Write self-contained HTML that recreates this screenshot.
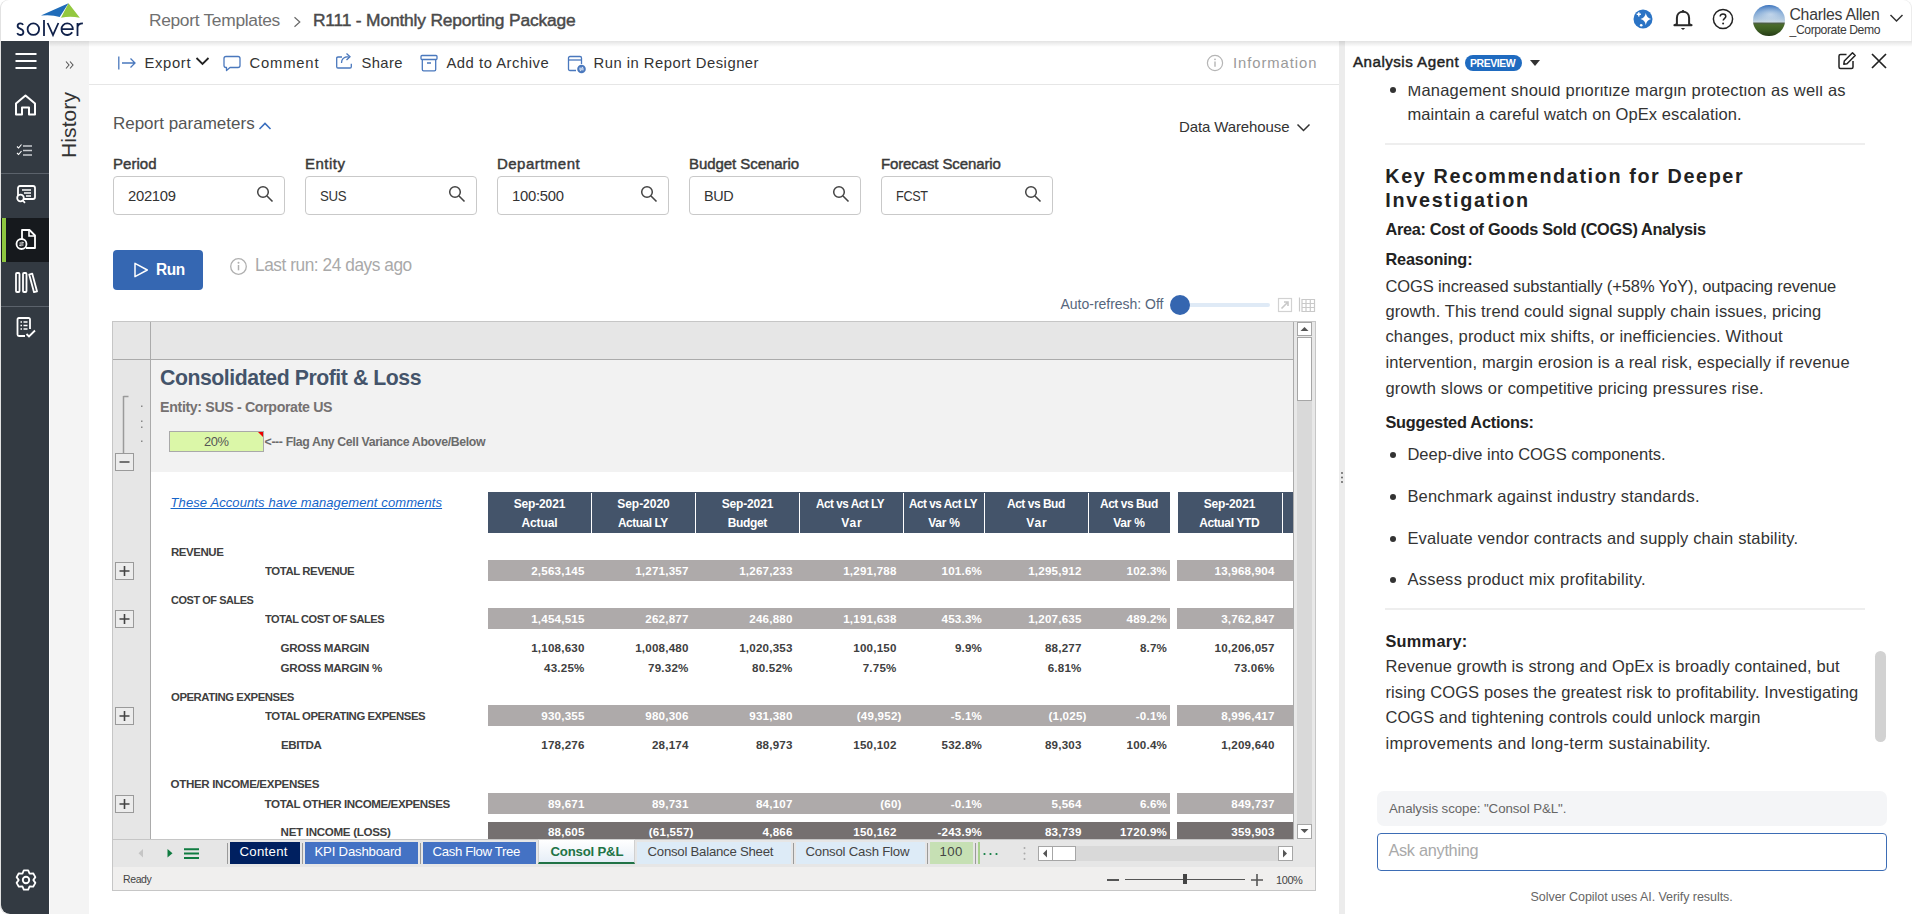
<!DOCTYPE html>
<html><head><meta charset="utf-8"><title>R111 - Monthly Reporting Package</title>
<style>
html,body{margin:0;padding:0;width:1912px;height:914px;overflow:hidden;background:#fff;font-family:"Liberation Sans",sans-serif;}
.t{position:absolute;white-space:nowrap;}
#clip{position:absolute;left:0;top:0;width:1912px;height:914px;overflow:hidden;}
</style></head><body><div id="clip">
<div style="position:absolute;left:0px;top:0px;width:1912px;height:914px;background:#fff;border-radius:8px;box-shadow:inset 1px 0 0 #e2e2e2,inset -1px 0 0 #ececec;"></div>
<div style="position:absolute;left:1px;top:41px;width:48px;height:873px;background:#333a42;border-bottom-left-radius:9px;"></div>
<div style="position:absolute;left:1px;top:218px;width:48px;height:44px;background:#16191d;"></div>
<div style="position:absolute;left:2px;top:218px;width:4px;height:44px;background:#8dc63f;"></div>
<div style="position:absolute;left:1px;top:173px;width:48px;height:1px;background:#5b626b;"></div>
<div style="position:absolute;left:1px;top:306px;width:48px;height:1px;background:#5b626b;"></div>
<div style="position:absolute;left:49px;top:41px;width:1px;height:873px;background:#fff;"></div>
<div style="position:absolute;left:50px;top:41px;width:39px;height:873px;background:#f4f4f4;"></div>
<div style="position:absolute;left:89px;top:41px;width:1250px;height:873px;background:#fff;"></div>
<div style="position:absolute;left:89px;top:84px;width:1250px;height:1px;background:#e6e6e6;"></div>
<div style="position:absolute;left:1339px;top:41px;width:6px;height:873px;background:#ececec;"></div>
<div style="position:absolute;left:1345px;top:41px;width:567px;height:873px;background:#fff;"></div>
<div style="position:absolute;left:49px;top:41px;width:1863px;height:6px;background:linear-gradient(rgba(0,0,0,0.11),rgba(0,0,0,0));"></div>
<svg style="position:absolute;left:0;top:0" width="90" height="40" viewBox="0 0 90 40"><path d="M40.9 15.5 L68.5 3.3 L59.7 17.1 Q52 14.3 40.9 15.5 Z" fill="#1f6cb9"/><path d="M68.5 3.3 L79.8 17.7 Q70 15.6 61 17.7 Z" fill="#93c83f"/><g fill="none" stroke="#10214a" stroke-width="1.8"><path d="M23.1 24.9 C22.5 23.7 21.5 23.3 20.4 23.3 C18.7 23.3 17.6 24.4 17.6 25.9 C17.6 27.5 18.9 28.2 20.5 28.8 C22.3 29.5 23.4 30.3 23.4 32.2 C23.4 34 22 35 20.2 35 C18.7 35 17.7 34.3 17.2 33.2"/><circle cx="33.35" cy="29.2" r="5.75"/><path d="M44 20.1 V35.9"/><path d="M47.6 23 L53 35 L58.4 23"/><path d="M61.6 29.1 H72.8 C72.8 25.8 70.4 23.4 67.2 23.4 C64 23.4 61.5 25.9 61.5 29.2 C61.5 32.5 64 35 67.2 35 C69.4 35 71.1 33.9 72.2 32.3"/><path d="M77.5 23 V35.9 M77.5 27.8 C77.5 24.9 79.5 23.4 82.9 23.4"/></g></svg>
<div class="t" style="left:148.89px;top:10px;font-size:17.4px;line-height:21px;color:#707070;letter-spacing:-0.305px;">Report Templates</div>
<svg style="position:absolute;left:290px;top:14px" width="14" height="16"><polyline points="4.5,3.2 9.8,8 4.5,12.8" fill="none" stroke="#6a6a6a" stroke-width="1.2"/></svg>
<div class="t" style="left:312.89px;top:10px;font-size:17.4px;line-height:21px;color:#4a4a4a;letter-spacing:-0.173px;-webkit-text-stroke:0.45px #4a4a4a;">R111 - Monthly Reporting Package</div>
<svg style="position:absolute;left:1633px;top:9px" width="20" height="20" viewBox="0 0 20 20"><circle cx="10" cy="10" r="9.5" fill="#2a73c5"/><path d="M12.8 4 Q13.6 9 18.2 10 Q13.6 11 12.8 16 Q12 11 7.4 10 Q12 9 12.8 4 Z" fill="#fff"/><path d="M5.8 3.2v4.2M3.7 5.3h4.2" stroke="#fff" stroke-width="1.4"/><circle cx="8.2" cy="16.3" r="1.3" fill="#fff"/></svg>
<svg style="position:absolute;left:1671px;top:6px" width="24" height="26" viewBox="0 0 24 26"><path d="M5.9 18.1 V12 C5.9 8.3 8.4 5.8 12 5.8 C15.6 5.8 18.1 8.3 18.1 12 V18.1 L20.6 19.2 H3.4 Z" fill="none" stroke="#2a2a2a" stroke-width="2" stroke-linejoin="round"/><circle cx="12" cy="5.2" r="1.3" fill="#2a2a2a"/><path d="M9.8 22 H14.2 L12 24 Z" fill="#2a2a2a"/></svg>
<svg style="position:absolute;left:1712px;top:8px" width="22" height="22" viewBox="0 0 22 22"><circle cx="11" cy="11" r="9.6" fill="none" stroke="#222" stroke-width="1.5"/><path d="M8.2 8.6 C8.2 6.9 9.5 6 11 6 C12.6 6 13.8 7 13.8 8.4 C13.8 10.3 11.2 10.4 11.2 12.6" fill="none" stroke="#222" stroke-width="1.5"/><circle cx="11.1" cy="15.4" r="1" fill="#222"/></svg>
<div style="position:absolute;left:1753px;top:5px;width:31.5px;height:31px;border-radius:50%;overflow:hidden;background:radial-gradient(ellipse 55% 30% at 55% 30%,rgba(235,242,248,0.6) 0%,rgba(235,242,248,0) 100%),linear-gradient(180deg,#3a72bd 0%,#6d9bd0 22%,#a9c3dd 45%,#c9d8e2 55%,#4d5c48 58%,#4a6b2a 64%,#3d5e22 80%,#263c17 100%);"></div>
<div class="t" style="left:1789.45px;top:5px;font-size:15.8px;line-height:19px;color:#3a3a3a;letter-spacing:-0.237px;">Charles Allen</div>
<div class="t" style="left:1789.57px;top:23px;font-size:12.2px;line-height:15px;color:#3a3a3a;letter-spacing:-0.430px;">_Corporate Demo</div>
<svg style="position:absolute;left:1888px;top:12px" width="17" height="12"><polyline points="2.5,3 8.5,9 14.5,3" fill="none" stroke="#333" stroke-width="1.5"/></svg>
<svg style="position:absolute;left:15px;top:52px" width="22" height="18"><path d="M0.5 2h21M0.5 9h21M0.5 16h21" stroke="#fff" stroke-width="2"/></svg>
<svg style="position:absolute;left:13px;top:93px" width="25" height="24" viewBox="0 0 25 24"><path d="M3 10.5 L12.5 2.5 L22 10.5 L22 21.5 L16 21.5 L16 14.5 L9 14.5 L9 21.5 L3 21.5 Z" fill="none" stroke="#fff" stroke-width="2" stroke-linejoin="round"/></svg>
<svg style="position:absolute;left:16px;top:143px" width="18" height="15" viewBox="0 0 18 15"><path d="M1 3.5 L2.6 5 L5.5 1.5 M1 10 L2.6 11.5 L5.5 8" fill="none" stroke="#fff" stroke-width="1.1"/><path d="M7 3h9M7 7.5h9M7 12h9" stroke="#c9ccd0" stroke-width="1.4"/></svg>
<svg style="position:absolute;left:15px;top:185px" width="22" height="19" viewBox="0 0 22 19"><rect x="3" y="1" width="17" height="13" rx="2" fill="none" stroke="#fff" stroke-width="1.8"/><path d="M7 5h9M9 8h7M11 11h5" stroke="#fff" stroke-width="1.6"/><circle cx="5.5" cy="13" r="3.3" fill="#333a42" stroke="#fff" stroke-width="1.8"/><path d="M7.8 15.5 L10 17.8" stroke="#fff" stroke-width="1.8"/></svg>
<svg style="position:absolute;left:15px;top:228px" width="22" height="22" viewBox="0 0 22 22"><path d="M7 14 L7 2 L14.5 2 L20 7.5 L20 20 L11 20" fill="none" stroke="#fff" stroke-width="1.8" stroke-linejoin="round"/><path d="M14 2 L14 8 L20 8" fill="none" stroke="#fff" stroke-width="1.6"/><circle cx="6.5" cy="16" r="5" fill="#16191d" stroke="#fff" stroke-width="1.8"/><path d="M4.5 15 h4 l-1.3 -1.3 M8.5 17 h-4 l1.3 1.3" fill="none" stroke="#fff" stroke-width="1"/></svg>
<svg style="position:absolute;left:14px;top:272px" width="24" height="22" viewBox="0 0 24 22"><rect x="2" y="1" width="3.5" height="19" rx="1" fill="none" stroke="#fff" stroke-width="1.8"/><rect x="9" y="1" width="3.5" height="19" rx="1" fill="none" stroke="#fff" stroke-width="1.8"/><path d="M15.2 2.5 L18.2 1.6 L23 19.3 L20 20.2 Z" fill="none" stroke="#fff" stroke-width="1.8" stroke-linejoin="round"/></svg>
<svg style="position:absolute;left:15px;top:317px" width="22" height="21" viewBox="0 0 22 21"><path d="M15 12 L15 2.5 Q15 1 13.5 1 L4 1 Q2.5 1 2.5 2.5 L2.5 17.5 Q2.5 19 4 19 L10 19" fill="none" stroke="#fff" stroke-width="1.8"/><path d="M5.5 5h1.5M8.5 5h4M5.5 8.5h1.5M8.5 8.5h4M5.5 12h1.5M8.5 12h4" stroke="#fff" stroke-width="1.6"/><path d="M11.5 17 L14 19.5 L20 13.5" fill="none" stroke="#fff" stroke-width="1.8"/></svg>
<svg style="position:absolute;left:13.5px;top:868px" width="24" height="24" viewBox="0 0 24 24"><path d="M8.41 5.53 L9.80 2.45 L14.20 2.45 L15.59 5.53 L15.81 5.66 L19.17 5.32 L21.37 9.13 L19.40 11.87 L19.40 12.13 L21.37 14.87 L19.17 18.68 L15.81 18.34 L15.59 18.47 L14.20 21.55 L9.80 21.55 L8.41 18.47 L8.19 18.34 L4.83 18.68 L2.63 14.87 L4.60 12.13 L4.60 11.87 L2.63 9.13 L4.83 5.32 L8.19 5.66 Z" fill="none" stroke="#fff" stroke-width="1.8" stroke-linejoin="round"/><circle cx="12" cy="12" r="3.2" fill="none" stroke="#fff" stroke-width="1.9"/></svg>
<svg style="position:absolute;left:64px;top:59px" width="11" height="12"><path d="M2 2.5 L5 6 L2 9.5 M6 2.5 L9 6 L6 9.5" fill="none" stroke="#555" stroke-width="1.1"/></svg>
<div style="position:absolute;left:75.5px;top:157.5px;transform:rotate(-90deg);transform-origin:0 0;font-family:'Liberation Sans';font-size:21px;line-height:21px;color:#333;white-space:nowrap;letter-spacing:0.1px;"><span style="position:relative;top:-17.8px">History</span></div>
<svg style="position:absolute;left:117px;top:55px" width="20" height="16" viewBox="0 0 20 16"><path d="M1.8 1.5v13M5 8h13M13.5 3.5 L18 8 L13.5 12.5" fill="none" stroke="#4a78bd" stroke-width="1.3"/></svg>
<div class="t" style="left:144.48px;top:54px;font-size:14.8px;line-height:18px;color:#333;letter-spacing:0.654px;">Export</div>
<svg style="position:absolute;left:194px;top:55px" width="17" height="12"><polyline points="2.5,3 8.5,9 14.5,3" fill="none" stroke="#222" stroke-width="1.8"/></svg>
<svg style="position:absolute;left:222px;top:54px" width="20" height="19" viewBox="0 0 20 19"><path d="M4 2.5 h12 q2 0 2 2 v7 q0 2 -2 2 h-8 l-3.5 3 v-3 h-0.5 q-2 0 -2 -2 v-7 q0 -2 2 -2z" fill="none" stroke="#4a78bd" stroke-width="1.3" stroke-linejoin="round"/></svg>
<div class="t" style="left:249.48px;top:54px;font-size:14.8px;line-height:18px;color:#333;letter-spacing:0.817px;">Comment</div>
<svg style="position:absolute;left:335px;top:51px" width="20" height="19" viewBox="0 0 20 19"><path d="M7 6 h-4 q-1.3 0-1.3 1.3 v8.4 q0 1.3 1.3 1.3 h12 q1.3 0 1.3-1.3 v-3" fill="none" stroke="#4a78bd" stroke-width="1.3"/><path d="M6.5 12 q0-6 7-6.3 M11.5 2.5 L15 5.8 L11.5 9" fill="none" stroke="#4a78bd" stroke-width="1.3"/></svg>
<div class="t" style="left:361.48px;top:54px;font-size:14.8px;line-height:18px;color:#333;letter-spacing:0.388px;">Share</div>
<svg style="position:absolute;left:419px;top:53px" width="20" height="20" viewBox="0 0 20 20"><rect x="2" y="2.5" width="16" height="4" rx="1" fill="none" stroke="#4a78bd" stroke-width="1.3"/><path d="M3.3 6.5 v10 q0 1.3 1.3 1.3 h10.8 q1.3 0 1.3-1.3 v-10 M8 10h4" fill="none" stroke="#4a78bd" stroke-width="1.3"/></svg>
<div class="t" style="left:446.48px;top:54px;font-size:14.8px;line-height:18px;color:#333;letter-spacing:0.524px;">Add to Archive</div>
<svg style="position:absolute;left:566px;top:54px" width="22" height="20" viewBox="0 0 22 20"><path d="M10 16.5 h-6 q-1.5 0-1.5-1.5 v-11 q0-1.5 1.5-1.5 h10 q1.5 0 1.5 1.5 v6" fill="none" stroke="#4a78bd" stroke-width="1.3"/><path d="M2.5 6h13" stroke="#4a78bd" stroke-width="1.3"/><circle cx="15.5" cy="15" r="4.3" fill="#4a78bd"/><path d="M13.3 14.2 h4 l-1.1-1.1 M17.7 15.8 h-4 l1.1 1.1" fill="none" stroke="#fff" stroke-width="0.9"/></svg>
<div class="t" style="left:593.48px;top:54px;font-size:14.8px;line-height:18px;color:#333;letter-spacing:0.496px;">Run in Report Designer</div>
<svg style="position:absolute;left:1206px;top:54px" width="18" height="18" viewBox="0 0 18 18"><circle cx="9" cy="9" r="7.6" fill="none" stroke="#b5b5b5" stroke-width="1.2"/><path d="M9 7.6v5.2" stroke="#b5b5b5" stroke-width="1.4"/><circle cx="9" cy="5.3" r="0.9" fill="#b5b5b5"/></svg>
<div class="t" style="left:1232.98px;top:54px;font-size:14.8px;line-height:18px;color:#9a9a9a;letter-spacing:0.952px;">Information</div>
<div class="t" style="left:112.91px;top:114px;font-size:17px;line-height:20px;color:#555;">Report parameters</div>
<svg style="position:absolute;left:257px;top:120px" width="16" height="11"><polyline points="2.5,9 8,3.5 13.5,9" fill="none" stroke="#3a6fbf" stroke-width="1.6"/></svg>
<div class="t" style="left:1178.97px;top:118px;font-size:15px;line-height:18px;color:#333;letter-spacing:-0.112px;">Data Warehouse</div>
<svg style="position:absolute;left:1295px;top:121px" width="17" height="13"><polyline points="2.5,3.5 8.5,9.5 14.5,3.5" fill="none" stroke="#333" stroke-width="1.5"/></svg>
<div class="t" style="left:112.97px;top:155px;font-size:15px;line-height:18px;color:#3a3a3a;letter-spacing:0.038px;-webkit-text-stroke:0.45px #3a3a3a;">Period</div>
<div style="position:absolute;left:113px;top:176px;width:172px;height:39px;box-sizing:border-box;border:1px solid #c9c9c9;border-radius:4px;background:#fff;"></div>
<div class="t" style="left:127.98px;top:187px;font-size:14.8px;line-height:18px;color:#333;letter-spacing:-0.268px;">202109</div>
<svg style="position:absolute;left:256px;top:185px" width="18" height="18" viewBox="0 0 18 18"><circle cx="7" cy="7" r="5.3" fill="none" stroke="#444" stroke-width="1.5"/><path d="M11 11 L16.5 16.5" stroke="#444" stroke-width="1.6"/></svg>
<div class="t" style="left:304.98px;top:155px;font-size:15px;line-height:18px;color:#3a3a3a;letter-spacing:0.507px;-webkit-text-stroke:0.45px #3a3a3a;">Entity</div>
<div style="position:absolute;left:305px;top:176px;width:172px;height:39px;box-sizing:border-box;border:1px solid #c9c9c9;border-radius:4px;background:#fff;"></div>
<div class="t" style="left:319.98px;top:187px;font-size:14.8px;line-height:18px;color:#333;transform:scaleX(0.8951);transform-origin:0.52px 0;letter-spacing:-0.450px;">SUS</div>
<svg style="position:absolute;left:448px;top:185px" width="18" height="18" viewBox="0 0 18 18"><circle cx="7" cy="7" r="5.3" fill="none" stroke="#444" stroke-width="1.5"/><path d="M11 11 L16.5 16.5" stroke="#444" stroke-width="1.6"/></svg>
<div class="t" style="left:496.98px;top:155px;font-size:15px;line-height:18px;color:#3a3a3a;letter-spacing:0.476px;-webkit-text-stroke:0.45px #3a3a3a;">Department</div>
<div style="position:absolute;left:497px;top:176px;width:172px;height:39px;box-sizing:border-box;border:1px solid #c9c9c9;border-radius:4px;background:#fff;"></div>
<div class="t" style="left:511.98px;top:187px;font-size:14.8px;line-height:18px;color:#333;letter-spacing:-0.242px;">100:500</div>
<svg style="position:absolute;left:640px;top:185px" width="18" height="18" viewBox="0 0 18 18"><circle cx="7" cy="7" r="5.3" fill="none" stroke="#444" stroke-width="1.5"/><path d="M11 11 L16.5 16.5" stroke="#444" stroke-width="1.6"/></svg>
<div class="t" style="left:688.98px;top:155px;font-size:15px;line-height:18px;color:#3a3a3a;letter-spacing:-0.061px;-webkit-text-stroke:0.45px #3a3a3a;">Budget Scenario</div>
<div style="position:absolute;left:689px;top:176px;width:172px;height:39px;box-sizing:border-box;border:1px solid #c9c9c9;border-radius:4px;background:#fff;"></div>
<div class="t" style="left:703.98px;top:187px;font-size:14.8px;line-height:18px;color:#333;transform:scaleX(0.9725);transform-origin:0.52px 0;letter-spacing:-0.450px;">BUD</div>
<svg style="position:absolute;left:832px;top:185px" width="18" height="18" viewBox="0 0 18 18"><circle cx="7" cy="7" r="5.3" fill="none" stroke="#444" stroke-width="1.5"/><path d="M11 11 L16.5 16.5" stroke="#444" stroke-width="1.6"/></svg>
<div class="t" style="left:880.98px;top:155px;font-size:15px;line-height:18px;color:#3a3a3a;letter-spacing:-0.117px;-webkit-text-stroke:0.45px #3a3a3a;">Forecast Scenario</div>
<div style="position:absolute;left:881px;top:176px;width:172px;height:39px;box-sizing:border-box;border:1px solid #c9c9c9;border-radius:4px;background:#fff;"></div>
<div class="t" style="left:895.98px;top:187px;font-size:14.8px;line-height:18px;color:#333;transform:scaleX(0.8553);transform-origin:0.52px 0;letter-spacing:-0.450px;">FCST</div>
<svg style="position:absolute;left:1024px;top:185px" width="18" height="18" viewBox="0 0 18 18"><circle cx="7" cy="7" r="5.3" fill="none" stroke="#444" stroke-width="1.5"/><path d="M11 11 L16.5 16.5" stroke="#444" stroke-width="1.6"/></svg>
<div style="position:absolute;left:113px;top:250px;width:90px;height:40px;background:#3567b2;border-radius:4px;"></div>
<svg style="position:absolute;left:132px;top:261px" width="18" height="18" viewBox="0 0 18 18"><path d="M3 2.3 L15.3 9 L3 15.7 Z" fill="none" stroke="#fff" stroke-width="1.5" stroke-linejoin="round"/></svg>
<div class="t" style="left:156.44px;top:260px;font-size:16px;line-height:19px;color:#fff;transform:scaleX(0.9628);transform-origin:0.56px 0;font-weight:700;letter-spacing:-0.450px;">Run</div>
<svg style="position:absolute;left:229px;top:257px" width="19" height="19" viewBox="0 0 19 19"><circle cx="9.5" cy="9.5" r="7.8" fill="none" stroke="#b0b0b0" stroke-width="1.3"/><path d="M9.5 8v5.3" stroke="#b0b0b0" stroke-width="1.5"/><circle cx="9.5" cy="5.7" r="1" fill="#b0b0b0"/></svg>
<div class="t" style="left:255.39px;top:255px;font-size:17.5px;line-height:21px;color:#a9a9a9;transform:scaleX(0.9868);transform-origin:0.61px 0;letter-spacing:-0.450px;">Last run: 24 days ago</div>
<div class="t" style="left:1060.51px;top:296px;font-size:14px;line-height:17px;color:#56667c;letter-spacing:-0.016px;">Auto-refresh: Off</div>
<div style="position:absolute;left:1180px;top:303px;width:90px;height:4px;background:#dfeaf6;border-radius:2px;"></div>
<div style="position:absolute;left:1170px;top:295px;width:20px;height:20px;background:#3566b0;border-radius:50%;"></div>
<svg style="position:absolute;left:1277px;top:297px" width="16" height="16" viewBox="0 0 16 16"><rect x="1.5" y="1.5" width="13" height="13" fill="none" stroke="#d2d2d2" stroke-width="1.2"/><path d="M4.5 11.5 L11 5 M7 5h4v4" fill="none" stroke="#c8c8c8" stroke-width="1.6"/></svg>
<svg style="position:absolute;left:1298px;top:296px" width="18" height="17" viewBox="0 0 18 17"><path d="M1.5 1.5v14M4 3.5h12.5v12H4zM4 7.5h12.5M4 11.5h12.5M8 3.5v12M12.3 3.5v12" fill="none" stroke="#c9c9c9" stroke-width="1.2"/></svg>
<div style="position:absolute;left:112px;top:321px;width:1204px;height:570px;box-sizing:border-box;border:1px solid #c6c6c6;background:#fff;"></div>
<div style="position:absolute;left:113px;top:322px;width:1181px;height:37px;background:#e6e6e6;"></div>
<div style="position:absolute;left:113px;top:359px;width:1181px;height:1px;background:#ababab;"></div>
<div style="position:absolute;left:113px;top:360px;width:37px;height:479px;background:#e6e6e6;"></div>
<div style="position:absolute;left:150px;top:322px;width:1px;height:517px;background:#ababab;"></div>
<div style="position:absolute;left:151px;top:360px;width:1142px;height:112px;background:#f2f2f2;"></div>
<div style="position:absolute;left:1293px;top:322px;width:1px;height:517px;background:#ababab;"></div>
<div style="position:absolute;left:1294px;top:322px;width:21px;height:518px;background:#e8e8e8;"></div>
<div style="position:absolute;left:1297px;top:337px;width:15px;height:502px;background:#d9d9d9;"></div>
<div style="position:absolute;left:1297px;top:322px;width:15px;height:14px;box-sizing:border-box;border:1px solid #a6a6a6;background:#fff;"></div>
<svg style="position:absolute;left:1299px;top:324px" width="11" height="10"><path d="M1.5 7 L5.5 3 L9.5 7 Z" fill="#555"/></svg>
<div style="position:absolute;left:1297px;top:337px;width:15px;height:64px;box-sizing:border-box;border:1px solid #a6a6a6;background:#fff;"></div>
<div style="position:absolute;left:1297px;top:824px;width:15px;height:15px;box-sizing:border-box;border:1px solid #a6a6a6;background:#fff;"></div>
<svg style="position:absolute;left:1299px;top:826px" width="11" height="10"><path d="M1.5 3 L5.5 7 L9.5 3 Z" fill="#555"/></svg>
<svg style="position:absolute;left:113px;top:390px" width="37" height="84"><path d="M10.5 6.5 h5 M10.5 6 v58" stroke="#9a9a9a" stroke-width="1.5" fill="none"/><rect x="28" y="15.5" width="1.5" height="1.5" fill="#888"/><rect x="28" y="30.5" width="1.5" height="1.5" fill="#888"/><rect x="28" y="36.5" width="1.5" height="1.5" fill="#888"/><rect x="28" y="50.5" width="1.5" height="1.5" fill="#888"/><rect x="2.5" y="63.5" width="18" height="17" fill="#ececec" stroke="#9a9a9a"/><path d="M6.5 72 h10" stroke="#555" stroke-width="1.6"/></svg>
<svg style="position:absolute;left:113px;top:562px" width="22" height="20"><rect x="2.5" y="0.5" width="18" height="17" fill="#ececec" stroke="#9a9a9a"/><path d="M6.5 9 h10 M11.5 4 v10" stroke="#444" stroke-width="1.6"/></svg>
<svg style="position:absolute;left:113px;top:610px" width="22" height="20"><rect x="2.5" y="0.5" width="18" height="17" fill="#ececec" stroke="#9a9a9a"/><path d="M6.5 9 h10 M11.5 4 v10" stroke="#444" stroke-width="1.6"/></svg>
<svg style="position:absolute;left:113px;top:707px" width="22" height="20"><rect x="2.5" y="0.5" width="18" height="17" fill="#ececec" stroke="#9a9a9a"/><path d="M6.5 9 h10 M11.5 4 v10" stroke="#444" stroke-width="1.6"/></svg>
<svg style="position:absolute;left:113px;top:795px" width="22" height="20"><rect x="2.5" y="0.5" width="18" height="17" fill="#ececec" stroke="#9a9a9a"/><path d="M6.5 9 h10 M11.5 4 v10" stroke="#444" stroke-width="1.6"/></svg>
<div class="t" style="left:159.85px;top:365px;font-size:21.4px;line-height:26px;color:#44546a;transform:scaleX(0.9932);transform-origin:0.75px 0;font-weight:700;letter-spacing:-0.450px;">Consolidated Profit &amp; Loss</div>
<div class="t" style="left:160.10px;top:399px;font-size:14.2px;line-height:17px;color:#757171;font-weight:700;letter-spacing:-0.356px;">Entity: SUS - Corporate US</div>
<div style="position:absolute;left:169px;top:431px;width:95px;height:21px;box-sizing:border-box;border:1px solid #a9a9a9;background:#dbf7a8;"></div>
<svg style="position:absolute;left:258px;top:432px" width="5" height="5"><path d="M0 0 H5 V5 Z" fill="#e00"/></svg>
<div class="t" style="left:203.94px;top:434px;font-size:13px;line-height:16px;color:#555;transform:scaleX(0.9914);transform-origin:0.46px 0;letter-spacing:-0.450px;">20%</div>
<div class="t" style="left:264.57px;top:435px;font-size:12.3px;line-height:15px;color:#6b6b6b;font-weight:700;letter-spacing:-0.357px;">&lt;--- Flag Any Cell Variance Above/Below</div>
<div class="t" style="left:170.54px;top:495px;font-size:13px;line-height:16px;color:#1565c9;font-style:italic;letter-spacing:0.101px;text-decoration:underline;text-underline-offset:1px;">These Accounts have management comments</div>
<div style="position:absolute;left:488px;top:492px;width:682px;height:41px;background:#44546a;"></div>
<div style="position:absolute;left:1178px;top:492px;width:115px;height:41px;background:#44546a;"></div>
<div style="position:absolute;left:591px;top:493px;width:1px;height:40px;background:#fff;"></div>
<div style="position:absolute;left:695px;top:493px;width:1px;height:40px;background:#fff;"></div>
<div style="position:absolute;left:799px;top:493px;width:1px;height:40px;background:#fff;"></div>
<div style="position:absolute;left:903px;top:493px;width:1px;height:40px;background:#fff;"></div>
<div style="position:absolute;left:984px;top:493px;width:1px;height:40px;background:#fff;"></div>
<div style="position:absolute;left:1088px;top:493px;width:1px;height:40px;background:#fff;"></div>
<div style="position:absolute;left:1282px;top:493px;width:1px;height:40px;background:#fff;"></div>
<div class="t" style="left:513.63px;top:497px;font-size:12px;line-height:14px;color:#fff;font-weight:700;letter-spacing:-0.137px;">Sep-2021</div>
<div class="t" style="left:521.43px;top:516px;font-size:12px;line-height:14px;color:#fff;font-weight:700;letter-spacing:-0.107px;">Actual</div>
<div class="t" style="left:617.28px;top:497px;font-size:12px;line-height:14px;color:#fff;font-weight:700;letter-spacing:-0.037px;">Sep-2020</div>
<div class="t" style="left:618.18px;top:516px;font-size:12px;line-height:14px;color:#fff;transform:scaleX(0.9879);transform-origin:0.42px 0;font-weight:700;letter-spacing:-0.450px;">Actual LY</div>
<div class="t" style="left:721.63px;top:497px;font-size:12px;line-height:14px;color:#fff;font-weight:700;letter-spacing:-0.137px;">Sep-2021</div>
<div class="t" style="left:727.63px;top:516px;font-size:12px;line-height:14px;color:#fff;font-weight:700;letter-spacing:-0.317px;">Budget</div>
<div class="t" style="left:816.07px;top:497px;font-size:12px;line-height:14px;color:#fff;transform:scaleX(0.9727);transform-origin:0.42px 0;font-weight:700;letter-spacing:-0.450px;">Act vs Act LY</div>
<div class="t" style="left:841.33px;top:516px;font-size:12px;line-height:14px;color:#fff;font-weight:700;letter-spacing:0.827px;">Var</div>
<div class="t" style="left:908.57px;top:497px;font-size:12px;line-height:14px;color:#fff;transform:scaleX(0.9727);transform-origin:0.42px 0;font-weight:700;letter-spacing:-0.450px;">Act vs Act LY</div>
<div class="t" style="left:928.18px;top:516px;font-size:12px;line-height:14px;color:#fff;font-weight:700;letter-spacing:-0.262px;">Var %</div>
<div class="t" style="left:1007.19px;top:497px;font-size:12px;line-height:14px;color:#fff;transform:scaleX(0.9933);transform-origin:0.42px 0;font-weight:700;letter-spacing:-0.450px;">Act vs Bud</div>
<div class="t" style="left:1026.33px;top:516px;font-size:12px;line-height:14px;color:#fff;font-weight:700;letter-spacing:0.827px;">Var</div>
<div class="t" style="left:1099.69px;top:497px;font-size:12px;line-height:14px;color:#fff;transform:scaleX(0.9933);transform-origin:0.42px 0;font-weight:700;letter-spacing:-0.450px;">Act vs Bud</div>
<div class="t" style="left:1113.18px;top:516px;font-size:12px;line-height:14px;color:#fff;font-weight:700;letter-spacing:-0.262px;">Var %</div>
<div class="t" style="left:1203.63px;top:497px;font-size:12px;line-height:14px;color:#fff;font-weight:700;letter-spacing:-0.137px;">Sep-2021</div>
<div class="t" style="left:1199.13px;top:516px;font-size:12px;line-height:14px;color:#fff;font-weight:700;letter-spacing:-0.363px;">Actual YTD</div>
<div class="t" style="left:170.59px;top:545px;font-size:11.6px;line-height:14px;color:#404040;transform:scaleX(0.9898);transform-origin:0.41px 0;font-weight:700;letter-spacing:-0.450px;">REVENUE</div>
<div class="t" style="left:264.59px;top:564px;font-size:11.6px;line-height:14px;color:#404040;transform:scaleX(0.9821);transform-origin:0.41px 0;font-weight:700;letter-spacing:-0.450px;">TOTAL REVENUE</div>
<div class="t" style="left:170.59px;top:593px;font-size:11.6px;line-height:14px;color:#404040;transform:scaleX(0.9405);transform-origin:0.41px 0;font-weight:700;letter-spacing:-0.450px;">COST OF SALES</div>
<div class="t" style="left:264.59px;top:612px;font-size:11.6px;line-height:14px;color:#404040;transform:scaleX(0.9499);transform-origin:0.41px 0;font-weight:700;letter-spacing:-0.450px;">TOTAL COST OF SALES</div>
<div class="t" style="left:280.59px;top:641px;font-size:11.6px;line-height:14px;color:#404040;font-weight:700;letter-spacing:-0.300px;">GROSS MARGIN</div>
<div class="t" style="left:280.59px;top:661px;font-size:11.6px;line-height:14px;color:#404040;font-weight:700;letter-spacing:-0.294px;">GROSS MARGIN %</div>
<div class="t" style="left:170.59px;top:690px;font-size:11.6px;line-height:14px;color:#404040;transform:scaleX(0.9775);transform-origin:0.41px 0;font-weight:700;letter-spacing:-0.450px;">OPERATING EXPENSES</div>
<div class="t" style="left:264.59px;top:709px;font-size:11.6px;line-height:14px;color:#404040;transform:scaleX(0.9791);transform-origin:0.41px 0;font-weight:700;letter-spacing:-0.450px;">TOTAL OPERATING EXPENSES</div>
<div class="t" style="left:280.59px;top:738px;font-size:11.6px;line-height:14px;color:#404040;transform:scaleX(0.9977);transform-origin:0.41px 0;font-weight:700;letter-spacing:-0.450px;">EBITDA</div>
<div class="t" style="left:170.59px;top:777px;font-size:11.6px;line-height:14px;color:#404040;font-weight:700;letter-spacing:-0.354px;">OTHER INCOME/EXPENSES</div>
<div class="t" style="left:264.59px;top:797px;font-size:11.6px;line-height:14px;color:#404040;font-weight:700;letter-spacing:-0.418px;">TOTAL OTHER INCOME/EXPENSES</div>
<div class="t" style="left:280.59px;top:825px;font-size:11.6px;line-height:14px;color:#404040;font-weight:700;letter-spacing:-0.311px;">NET INCOME (LOSS)</div>
<div style="position:absolute;left:488px;top:560px;width:682px;height:21px;background:#aeaaaa;"></div>
<div style="position:absolute;left:1177px;top:560px;width:116px;height:21px;background:#aeaaaa;"></div>
<div style="position:absolute;left:488px;top:608px;width:682px;height:21px;background:#aeaaaa;"></div>
<div style="position:absolute;left:1177px;top:608px;width:116px;height:21px;background:#aeaaaa;"></div>
<div style="position:absolute;left:488px;top:705px;width:682px;height:21px;background:#aeaaaa;"></div>
<div style="position:absolute;left:1177px;top:705px;width:116px;height:21px;background:#aeaaaa;"></div>
<div style="position:absolute;left:488px;top:793px;width:682px;height:21px;background:#aeaaaa;"></div>
<div style="position:absolute;left:1177px;top:793px;width:116px;height:21px;background:#aeaaaa;"></div>
<div style="position:absolute;left:488px;top:822px;width:682px;height:17px;background:#757070;"></div>
<div style="position:absolute;left:1177px;top:822px;width:116px;height:17px;background:#757070;"></div>
<div class="t" style="left:531.23px;top:564px;font-size:11.6px;line-height:14px;color:#fff;font-weight:700;letter-spacing:0.200px;">2,563,145</div>
<div class="t" style="left:635.23px;top:564px;font-size:11.6px;line-height:14px;color:#fff;font-weight:700;letter-spacing:0.200px;">1,271,357</div>
<div class="t" style="left:739.23px;top:564px;font-size:11.6px;line-height:14px;color:#fff;font-weight:700;letter-spacing:0.200px;">1,267,233</div>
<div class="t" style="left:843.23px;top:564px;font-size:11.6px;line-height:14px;color:#fff;font-weight:700;letter-spacing:0.200px;">1,291,788</div>
<div class="t" style="left:941.58px;top:564px;font-size:11.6px;line-height:14px;color:#fff;font-weight:700;letter-spacing:0.200px;">101.6%</div>
<div class="t" style="left:1028.23px;top:564px;font-size:11.6px;line-height:14px;color:#fff;font-weight:700;letter-spacing:0.200px;">1,295,912</div>
<div class="t" style="left:1126.58px;top:564px;font-size:11.6px;line-height:14px;color:#fff;font-weight:700;letter-spacing:0.200px;">102.3%</div>
<div class="t" style="left:1214.58px;top:564px;font-size:11.6px;line-height:14px;color:#fff;font-weight:700;letter-spacing:0.200px;">13,968,904</div>
<div class="t" style="left:531.23px;top:612px;font-size:11.6px;line-height:14px;color:#fff;font-weight:700;letter-spacing:0.200px;">1,454,515</div>
<div class="t" style="left:645.30px;top:612px;font-size:11.6px;line-height:14px;color:#fff;font-weight:700;letter-spacing:0.200px;">262,877</div>
<div class="t" style="left:749.30px;top:612px;font-size:11.6px;line-height:14px;color:#fff;font-weight:700;letter-spacing:0.200px;">246,880</div>
<div class="t" style="left:843.23px;top:612px;font-size:11.6px;line-height:14px;color:#fff;font-weight:700;letter-spacing:0.200px;">1,191,638</div>
<div class="t" style="left:941.58px;top:612px;font-size:11.6px;line-height:14px;color:#fff;font-weight:700;letter-spacing:0.200px;">453.3%</div>
<div class="t" style="left:1028.23px;top:612px;font-size:11.6px;line-height:14px;color:#fff;font-weight:700;letter-spacing:0.200px;">1,207,635</div>
<div class="t" style="left:1126.58px;top:612px;font-size:11.6px;line-height:14px;color:#fff;font-weight:700;letter-spacing:0.200px;">489.2%</div>
<div class="t" style="left:1221.23px;top:612px;font-size:11.6px;line-height:14px;color:#fff;font-weight:700;letter-spacing:0.200px;">3,762,847</div>
<div class="t" style="left:531.23px;top:641px;font-size:11.6px;line-height:14px;color:#404040;font-weight:700;letter-spacing:0.200px;">1,108,630</div>
<div class="t" style="left:635.23px;top:641px;font-size:11.6px;line-height:14px;color:#404040;font-weight:700;letter-spacing:0.200px;">1,008,480</div>
<div class="t" style="left:739.23px;top:641px;font-size:11.6px;line-height:14px;color:#404040;font-weight:700;letter-spacing:0.200px;">1,020,353</div>
<div class="t" style="left:853.30px;top:641px;font-size:11.6px;line-height:14px;color:#404040;font-weight:700;letter-spacing:0.200px;">100,150</div>
<div class="t" style="left:954.88px;top:641px;font-size:11.6px;line-height:14px;color:#404040;font-weight:700;letter-spacing:0.200px;">9.9%</div>
<div class="t" style="left:1044.95px;top:641px;font-size:11.6px;line-height:14px;color:#404040;font-weight:700;letter-spacing:0.200px;">88,277</div>
<div class="t" style="left:1139.88px;top:641px;font-size:11.6px;line-height:14px;color:#404040;font-weight:700;letter-spacing:0.200px;">8.7%</div>
<div class="t" style="left:1214.58px;top:641px;font-size:11.6px;line-height:14px;color:#404040;font-weight:700;letter-spacing:0.200px;">10,206,057</div>
<div class="t" style="left:544.08px;top:661px;font-size:11.6px;line-height:14px;color:#404040;font-weight:700;letter-spacing:0.200px;">43.25%</div>
<div class="t" style="left:648.08px;top:661px;font-size:11.6px;line-height:14px;color:#404040;font-weight:700;letter-spacing:0.200px;">79.32%</div>
<div class="t" style="left:752.08px;top:661px;font-size:11.6px;line-height:14px;color:#404040;font-weight:700;letter-spacing:0.200px;">80.52%</div>
<div class="t" style="left:862.73px;top:661px;font-size:11.6px;line-height:14px;color:#404040;font-weight:700;letter-spacing:0.200px;">7.75%</div>
<div class="t" style="left:1047.73px;top:661px;font-size:11.6px;line-height:14px;color:#404040;font-weight:700;letter-spacing:0.200px;">6.81%</div>
<div class="t" style="left:1234.08px;top:661px;font-size:11.6px;line-height:14px;color:#404040;font-weight:700;letter-spacing:0.200px;">73.06%</div>
<div class="t" style="left:541.30px;top:709px;font-size:11.6px;line-height:14px;color:#fff;font-weight:700;letter-spacing:0.200px;">930,355</div>
<div class="t" style="left:645.30px;top:709px;font-size:11.6px;line-height:14px;color:#fff;font-weight:700;letter-spacing:0.200px;">980,306</div>
<div class="t" style="left:749.30px;top:709px;font-size:11.6px;line-height:14px;color:#fff;font-weight:700;letter-spacing:0.200px;">931,380</div>
<div class="t" style="left:856.82px;top:709px;font-size:11.6px;line-height:14px;color:#fff;font-weight:700;letter-spacing:0.200px;">(49,952)</div>
<div class="t" style="left:950.82px;top:709px;font-size:11.6px;line-height:14px;color:#fff;font-weight:700;letter-spacing:0.200px;">-5.1%</div>
<div class="t" style="left:1048.47px;top:709px;font-size:11.6px;line-height:14px;color:#fff;font-weight:700;letter-spacing:0.200px;">(1,025)</div>
<div class="t" style="left:1135.82px;top:709px;font-size:11.6px;line-height:14px;color:#fff;font-weight:700;letter-spacing:0.200px;">-0.1%</div>
<div class="t" style="left:1221.23px;top:709px;font-size:11.6px;line-height:14px;color:#fff;font-weight:700;letter-spacing:0.200px;">8,996,417</div>
<div class="t" style="left:541.30px;top:738px;font-size:11.6px;line-height:14px;color:#404040;font-weight:700;letter-spacing:0.200px;">178,276</div>
<div class="t" style="left:651.95px;top:738px;font-size:11.6px;line-height:14px;color:#404040;font-weight:700;letter-spacing:0.200px;">28,174</div>
<div class="t" style="left:755.95px;top:738px;font-size:11.6px;line-height:14px;color:#404040;font-weight:700;letter-spacing:0.200px;">88,973</div>
<div class="t" style="left:853.30px;top:738px;font-size:11.6px;line-height:14px;color:#404040;font-weight:700;letter-spacing:0.200px;">150,102</div>
<div class="t" style="left:941.58px;top:738px;font-size:11.6px;line-height:14px;color:#404040;font-weight:700;letter-spacing:0.200px;">532.8%</div>
<div class="t" style="left:1044.95px;top:738px;font-size:11.6px;line-height:14px;color:#404040;font-weight:700;letter-spacing:0.200px;">89,303</div>
<div class="t" style="left:1126.58px;top:738px;font-size:11.6px;line-height:14px;color:#404040;font-weight:700;letter-spacing:0.200px;">100.4%</div>
<div class="t" style="left:1221.23px;top:738px;font-size:11.6px;line-height:14px;color:#404040;font-weight:700;letter-spacing:0.200px;">1,209,640</div>
<div class="t" style="left:547.95px;top:797px;font-size:11.6px;line-height:14px;color:#fff;font-weight:700;letter-spacing:0.200px;">89,671</div>
<div class="t" style="left:651.95px;top:797px;font-size:11.6px;line-height:14px;color:#fff;font-weight:700;letter-spacing:0.200px;">89,731</div>
<div class="t" style="left:755.95px;top:797px;font-size:11.6px;line-height:14px;color:#fff;font-weight:700;letter-spacing:0.200px;">84,107</div>
<div class="t" style="left:880.19px;top:797px;font-size:11.6px;line-height:14px;color:#fff;font-weight:700;letter-spacing:0.200px;">(60)</div>
<div class="t" style="left:950.82px;top:797px;font-size:11.6px;line-height:14px;color:#fff;font-weight:700;letter-spacing:0.200px;">-0.1%</div>
<div class="t" style="left:1051.59px;top:797px;font-size:11.6px;line-height:14px;color:#fff;font-weight:700;letter-spacing:0.200px;">5,564</div>
<div class="t" style="left:1139.88px;top:797px;font-size:11.6px;line-height:14px;color:#fff;font-weight:700;letter-spacing:0.200px;">6.6%</div>
<div class="t" style="left:1231.30px;top:797px;font-size:11.6px;line-height:14px;color:#fff;font-weight:700;letter-spacing:0.200px;">849,737</div>
<div class="t" style="left:547.95px;top:825px;font-size:11.6px;line-height:14px;color:#fff;font-weight:700;letter-spacing:0.200px;">88,605</div>
<div class="t" style="left:648.82px;top:825px;font-size:11.6px;line-height:14px;color:#fff;font-weight:700;letter-spacing:0.200px;">(61,557)</div>
<div class="t" style="left:762.59px;top:825px;font-size:11.6px;line-height:14px;color:#fff;font-weight:700;letter-spacing:0.200px;">4,866</div>
<div class="t" style="left:853.30px;top:825px;font-size:11.6px;line-height:14px;color:#fff;font-weight:700;letter-spacing:0.200px;">150,162</div>
<div class="t" style="left:937.52px;top:825px;font-size:11.6px;line-height:14px;color:#fff;font-weight:700;letter-spacing:0.200px;">-243.9%</div>
<div class="t" style="left:1044.95px;top:825px;font-size:11.6px;line-height:14px;color:#fff;font-weight:700;letter-spacing:0.200px;">83,739</div>
<div class="t" style="left:1119.94px;top:825px;font-size:11.6px;line-height:14px;color:#fff;font-weight:700;letter-spacing:0.200px;">1720.9%</div>
<div class="t" style="left:1231.30px;top:825px;font-size:11.6px;line-height:14px;color:#fff;font-weight:700;letter-spacing:0.200px;">359,903</div>
<div style="position:absolute;left:113px;top:839px;width:1181px;height:1px;background:#c6c6c6;"></div>
<div style="position:absolute;left:113px;top:840px;width:1202px;height:27px;background:#e6e6e6;"></div>
<div style="position:absolute;left:113px;top:867px;width:1202px;height:23px;background:#f0efee;"></div>
<svg style="position:absolute;left:136px;top:848px" width="10" height="11"><path d="M7 1 L2.5 5.3 L7 9.6 Z" fill="#c5c5c5"/></svg>
<svg style="position:absolute;left:165px;top:848px" width="10" height="11"><path d="M2.5 1 L7.5 5.3 L2.5 9.6 Z" fill="#107c41"/></svg>
<svg style="position:absolute;left:183px;top:847px" width="17" height="14"><path d="M1 2.2h15M1 6.5h15M1 11h15" stroke="#107c41" stroke-width="2"/></svg>
<div style="position:absolute;left:227px;top:843px;width:1px;height:21px;background:#9a9a9a;"></div>
<div style="position:absolute;left:230px;top:842px;width:70px;height:22px;background:#002060;"></div>
<div class="t" style="left:239.54px;top:844px;font-size:13.2px;line-height:16px;color:#fff;letter-spacing:0.289px;">Content</div>
<div style="position:absolute;left:302px;top:843px;width:1px;height:21px;background:#9a9a9a;"></div>
<div style="position:absolute;left:305px;top:842px;width:113px;height:22px;background:#4472c4;"></div>
<div class="t" style="left:314.54px;top:844px;font-size:13.2px;line-height:16px;color:#fff;letter-spacing:-0.209px;">KPI Dashboard</div>
<div style="position:absolute;left:420px;top:843px;width:1px;height:21px;background:#9a9a9a;"></div>
<div style="position:absolute;left:423px;top:842px;width:113px;height:22px;background:#4472c4;"></div>
<div class="t" style="left:432.54px;top:844px;font-size:13.2px;line-height:16px;color:#fff;letter-spacing:-0.358px;">Cash Flow Tree</div>
<div style="position:absolute;left:538px;top:839px;width:97px;height:25px;box-sizing:border-box;border:1px solid #d0d0d0;border-bottom:2px solid #217346;background:linear-gradient(#fff,#e6eef7);"></div>
<div class="t" style="left:550.54px;top:844px;font-size:13.2px;line-height:16px;color:#217346;font-weight:700;letter-spacing:-0.200px;">Consol P&amp;L</div>
<div style="position:absolute;left:637px;top:842px;width:154px;height:22px;background:#ddebf7;"></div>
<div class="t" style="left:647.54px;top:844px;font-size:13.2px;line-height:16px;color:#444;letter-spacing:-0.241px;">Consol Balance Sheet</div>
<div style="position:absolute;left:793px;top:843px;width:1px;height:21px;background:#9a9a9a;"></div>
<div style="position:absolute;left:796px;top:842px;width:129px;height:22px;background:#ddebf7;"></div>
<div class="t" style="left:805.54px;top:844px;font-size:13.2px;line-height:16px;color:#444;letter-spacing:-0.206px;">Consol Cash Flow</div>
<div style="position:absolute;left:927px;top:843px;width:1px;height:21px;background:#9a9a9a;"></div>
<div style="position:absolute;left:930px;top:842px;width:43px;height:22px;background:#c6e0b4;"></div>
<div class="t" style="left:939.54px;top:844px;font-size:13.2px;line-height:16px;color:#444;letter-spacing:0.461px;">100</div>
<div style="position:absolute;left:975px;top:843px;width:1px;height:21px;background:#9a9a9a;"></div>
<div style="position:absolute;left:978px;top:842px;width:2px;height:22px;background:#a9d08e;"></div>
<svg style="position:absolute;left:982px;top:851px" width="20" height="6"><circle cx="2.5" cy="3" r="1.1" fill="#107c41"/><circle cx="8.5" cy="3" r="1.1" fill="#107c41"/><circle cx="14.5" cy="3" r="1.1" fill="#107c41"/></svg>
<svg style="position:absolute;left:1022px;top:845px" width="5" height="18"><circle cx="2.5" cy="3" r="1" fill="#aaa"/><circle cx="2.5" cy="8.5" r="1" fill="#aaa"/><circle cx="2.5" cy="14" r="1" fill="#aaa"/></svg>
<div style="position:absolute;left:1038px;top:846px;width:254px;height:15px;background:#d9d9d9;"></div>
<div style="position:absolute;left:1038px;top:846px;width:15px;height:15px;box-sizing:border-box;border:1px solid #a6a6a6;background:#fff;"></div>
<svg style="position:absolute;left:1040px;top:848px" width="10" height="11"><path d="M7 1.5 L3 5.5 L7 9.5 Z" fill="#555"/></svg>
<div style="position:absolute;left:1052px;top:846px;width:24px;height:15px;box-sizing:border-box;border:1px solid #a6a6a6;background:#fff;"></div>
<div style="position:absolute;left:1278px;top:846px;width:15px;height:15px;box-sizing:border-box;border:1px solid #a6a6a6;background:#fff;"></div>
<svg style="position:absolute;left:1280px;top:848px" width="10" height="11"><path d="M3 1.5 L7 5.5 L3 9.5 Z" fill="#555"/></svg>
<div class="t" style="left:123.39px;top:872px;font-size:11.6px;line-height:14px;color:#444;transform:scaleX(0.9061);transform-origin:0.41px 0;letter-spacing:-0.450px;">Ready</div>
<div style="position:absolute;left:1107px;top:879px;width:12px;height:2px;background:#555;"></div>
<div style="position:absolute;left:1125px;top:879px;width:120px;height:1px;background:#555;"></div>
<div style="position:absolute;left:1183px;top:874px;width:4px;height:10px;background:#444;"></div>
<svg style="position:absolute;left:1250px;top:873px" width="14" height="14"><path d="M1 7h12M7 1v12" stroke="#555" stroke-width="1.6"/></svg>
<div class="t" style="left:1275.59px;top:873px;font-size:11.8px;line-height:14px;color:#444;transform:scaleX(0.9287);transform-origin:0.41px 0;letter-spacing:-0.450px;">100%</div>
<div class="t" style="left:1352.97px;top:53px;font-size:15.2px;line-height:18px;color:#222;letter-spacing:0.469px;-webkit-text-stroke:0.45px #222;">Analysis Agent</div>
<div style="position:absolute;left:1465px;top:55px;width:57px;height:16px;background:#1f6bc0;border-radius:8px;"></div>
<div class="t" style="left:1469.95px;top:57px;font-size:10.8px;line-height:13px;color:#fff;transform:scaleX(0.9711);transform-origin:0.38px 0;font-weight:700;letter-spacing:-0.450px;">PREVIEW</div>
<svg style="position:absolute;left:1529px;top:58px" width="12" height="10"><path d="M1 2 L11 2 L6 8 Z" fill="#333"/></svg>
<svg style="position:absolute;left:1837px;top:51px" width="20" height="20" viewBox="0 0 20 20"><path d="M9.5 3.5 h-6 q-1.5 0-1.5 1.5 v11 q0 1.5 1.5 1.5 h11 q1.5 0 1.5-1.5 v-6" fill="none" stroke="#222" stroke-width="1.5"/><path d="M15.5 1.8 L18.2 4.5 L10 12.7 L6.8 13.2 L7.3 10 Z" fill="none" stroke="#222" stroke-width="1.5" stroke-linejoin="round"/></svg>
<svg style="position:absolute;left:1870px;top:52px" width="18" height="18"><path d="M2 2 L16 16 M16 2 L2 16" stroke="#222" stroke-width="1.7"/></svg>
<div style="position:absolute;left:1345px;top:86px;width:567px;height:700px;overflow:hidden"><div style="position:absolute;left:-1345px;top:-86px;width:1912px;height:914px">
<div class="t" style="left:1407.42px;top:80px;font-size:16.5px;line-height:20px;color:#333;letter-spacing:0.225px;">Management should prioritize margin protection as well as</div>
<div class="t" style="left:1407.42px;top:104px;font-size:16.5px;line-height:20px;color:#333;letter-spacing:0.093px;">maintain a careful watch on OpEx escalation.</div>
<div style="position:absolute;left:1385px;top:143px;width:480px;height:2px;background:#eeeeee;"></div>
<div class="t" style="left:1385.31px;top:164px;font-size:19.8px;line-height:24px;color:#222;font-weight:700;letter-spacing:1.614px;">Key Recommendation for Deeper</div>
<div class="t" style="left:1385.31px;top:188px;font-size:19.8px;line-height:24px;color:#222;font-weight:700;letter-spacing:1.740px;">Investigation</div>
<div class="t" style="left:1385.43px;top:219px;font-size:16.3px;line-height:20px;color:#222;font-weight:700;letter-spacing:-0.301px;">Area: Cost of Goods Sold (COGS) Analysis</div>
<div class="t" style="left:1385.43px;top:249px;font-size:16.3px;line-height:20px;color:#222;font-weight:700;letter-spacing:-0.168px;">Reasoning:</div>
<div class="t" style="left:1385.42px;top:276px;font-size:16.5px;line-height:20px;color:#333;letter-spacing:-0.112px;">COGS increased substantially (+58% YoY), outpacing revenue</div>
<div class="t" style="left:1385.42px;top:301px;font-size:16.5px;line-height:20px;color:#333;letter-spacing:0.118px;">growth. This trend could signal supply chain issues, pricing</div>
<div class="t" style="left:1385.42px;top:326px;font-size:16.5px;line-height:20px;color:#333;letter-spacing:0.177px;">changes, product mix shifts, or inefficiencies. Without</div>
<div class="t" style="left:1385.42px;top:352px;font-size:16.5px;line-height:20px;color:#333;letter-spacing:0.143px;">intervention, margin erosion is a real risk, especially if revenue</div>
<div class="t" style="left:1385.42px;top:378px;font-size:16.5px;line-height:20px;color:#333;letter-spacing:0.190px;">growth slows or competitive pricing pressures rise.</div>
<div class="t" style="left:1385.43px;top:412px;font-size:16.3px;line-height:20px;color:#222;font-weight:700;letter-spacing:-0.220px;">Suggested Actions:</div>
<div class="t" style="left:1407.42px;top:444px;font-size:16.5px;line-height:20px;color:#333;letter-spacing:-0.016px;">Deep-dive into COGS components.</div>
<div style="position:absolute;left:1390px;top:452px;width:6px;height:6px;background:#333;border-radius:50%;"></div>
<div class="t" style="left:1407.42px;top:486px;font-size:16.5px;line-height:20px;color:#333;letter-spacing:0.192px;">Benchmark against industry standards.</div>
<div style="position:absolute;left:1390px;top:494px;width:6px;height:6px;background:#333;border-radius:50%;"></div>
<div class="t" style="left:1407.42px;top:528px;font-size:16.5px;line-height:20px;color:#333;letter-spacing:0.163px;">Evaluate vendor contracts and supply chain stability.</div>
<div style="position:absolute;left:1390px;top:535.5px;width:6px;height:6px;background:#333;border-radius:50%;"></div>
<div class="t" style="left:1407.42px;top:569px;font-size:16.5px;line-height:20px;color:#333;letter-spacing:0.259px;">Assess product mix profitability.</div>
<div style="position:absolute;left:1390px;top:577px;width:6px;height:6px;background:#333;border-radius:50%;"></div>
<div style="position:absolute;left:1390px;top:87px;width:6px;height:6px;background:#333;border-radius:50%;"></div>
<div style="position:absolute;left:1385px;top:608px;width:480px;height:2px;background:#eeeeee;"></div>
<div class="t" style="left:1385.43px;top:631px;font-size:16.3px;line-height:20px;color:#222;font-weight:700;letter-spacing:0.302px;">Summary:</div>
<div class="t" style="left:1385.42px;top:656px;font-size:16.5px;line-height:20px;color:#333;letter-spacing:0.097px;">Revenue growth is strong and OpEx is broadly contained, but</div>
<div class="t" style="left:1385.42px;top:682px;font-size:16.5px;line-height:20px;color:#333;letter-spacing:0.110px;">rising COGS poses the greatest risk to profitability. Investigating</div>
<div class="t" style="left:1385.42px;top:707px;font-size:16.5px;line-height:20px;color:#333;letter-spacing:0.098px;">COGS and tightening controls could unlock margin</div>
<div class="t" style="left:1385.42px;top:733px;font-size:16.5px;line-height:20px;color:#333;letter-spacing:0.311px;">improvements and long-term sustainability.</div>
</div></div>
<div style="position:absolute;left:1875px;top:651px;width:11px;height:91px;background:#d2d2d2;border-radius:6px;"></div>
<div style="position:absolute;left:1377px;top:791px;width:510px;height:35px;background:#f4f5f7;border-radius:7px;"></div>
<div class="t" style="left:1389.03px;top:801px;font-size:13.3px;line-height:16px;color:#666;letter-spacing:-0.071px;">Analysis scope: &quot;Consol P&amp;L&quot;.</div>
<div style="position:absolute;left:1377px;top:833px;width:510px;height:38px;box-sizing:border-box;border:1.5px solid #3d6db5;border-radius:4px;background:#fff;"></div>
<div class="t" style="left:1388.43px;top:840px;font-size:16.3px;line-height:20px;color:#a9a9a9;letter-spacing:-0.280px;">Ask anything</div>
<div class="t" style="left:1530.56px;top:890px;font-size:12.5px;line-height:15px;color:#666;letter-spacing:-0.054px;">Solver Copilot uses AI. Verify results.</div>
<svg style="position:absolute;left:1340px;top:471px" width="4" height="14"><circle cx="2" cy="2" r="0.9" fill="#555"/><circle cx="2" cy="6.5" r="0.9" fill="#555"/><circle cx="2" cy="11" r="0.9" fill="#555"/></svg>
</div></body></html>
